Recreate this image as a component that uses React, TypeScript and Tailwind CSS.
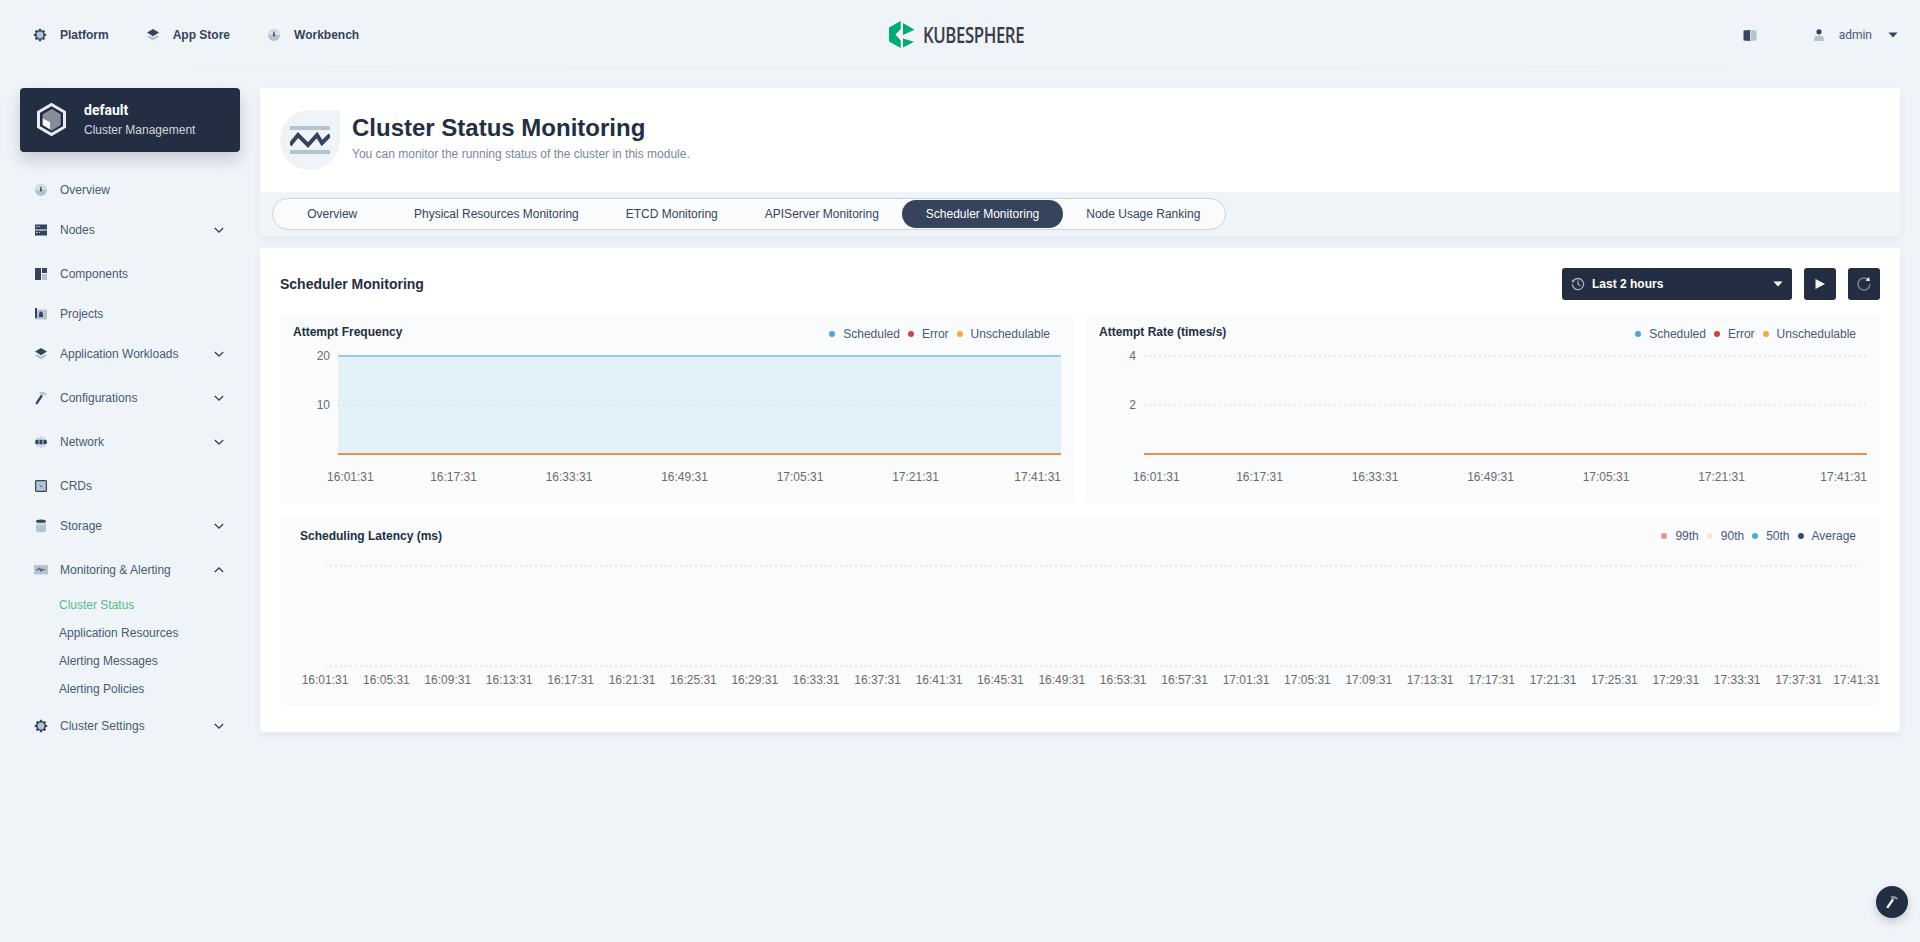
import type { ReactNode } from "react";

const DARK = "#36435c";
const LIGHT = "#b6c3cf";

// two tone nav icons, all on a 16 box
function Gear({ color = DARK }: { color?: string }) {
  return (
    <svg width="16" height="16" viewBox="0 0 16 16">
      {[0, 45, 90, 135, 180, 225, 270, 315].map((a) => (
        <rect key={a} x="6.9" y="1.8" width="2.2" height="2.2" fill={color} transform={`rotate(${a} 8 8)`} />
      ))}
      <circle cx="8" cy="8" r="4.2" fill={LIGHT} stroke={color} strokeWidth="1.6" />
    </svg>
  );
}

function Layers() {
  return (
    <svg width="16" height="16" viewBox="0 0 16 16">
      <path d="M2 9.6 4 8.6 8 10.6 12 8.6 14 9.6 8 13.6Z" fill={LIGHT} />
      <path d="M8 2 14 5.6 8 9.2 2 5.6Z" fill={DARK} />
    </svg>
  );
}

function Gauge() {
  return (
    <svg width="16" height="16" viewBox="0 0 16 16">
      <circle cx="8" cy="8" r="6" fill={LIGHT} />
      <path d="M8 2a6 6 0 0 1 6 6H2a6 6 0 0 1 6-6Z" fill="#d5dde5" />
      <path d="M7.6 4.4h.8l.6 4.2a1 1 0 1 1-2 0Z" fill={DARK} />
    </svg>
  );
}

function Server() {
  return (
    <svg width="16" height="16" viewBox="0 0 16 16">
      <rect x="2" y="2.5" width="12" height="5" fill={DARK} />
      <rect x="2" y="8.5" width="12" height="5" fill={DARK} />
      <rect x="3" y="4" width="2" height="1" fill={LIGHT} />
      <rect x="6" y="4" width="1" height="1" fill={LIGHT} />
      <rect x="3" y="10" width="2" height="1" fill={LIGHT} />
      <rect x="6" y="10" width="1" height="1" fill={LIGHT} />
      <rect x="7" y="7.5" width="2" height="1" fill={LIGHT} />
    </svg>
  );
}

function Blocks() {
  return (
    <svg width="16" height="16" viewBox="0 0 16 16">
      <rect x="2" y="2" width="6" height="12" fill={DARK} />
      <rect x="9" y="2" width="5" height="5" fill={DARK} />
      <rect x="9" y="8" width="5" height="6" fill={LIGHT} />
    </svg>
  );
}

function Project() {
  return (
    <svg width="16" height="16" viewBox="0 0 16 16">
      <rect x="2" y="3.5" width="12" height="10" fill={LIGHT} />
      <rect x="2" y="2" width="2" height="10" fill={DARK} />
      <path d="M8 5.5c1.4 0 1.8 1.6 2 3.5v2H6V9c.2-1.9.6-3.5 2-3.5Z" fill={DARK} />
    </svg>
  );
}

function Hammer({ handle = DARK, head = LIGHT }: { handle?: string; head?: string }) {
  return (
    <svg width="16" height="16" viewBox="0 0 16 16">
      <path d="M6.5 2.5C9 1.5 12 2 14 4.5l-1.5 1.2C11.5 4.8 10.5 4.4 9.5 5L8 5.2Z" fill={head} />
      <path d="M8 4.8 10 6 4.2 14.5 2.2 13.3Z" fill={handle} />
    </svg>
  );
}

function Globe() {
  return (
    <svg width="16" height="16" viewBox="0 0 16 16">
      <circle cx="8" cy="8" r="6" fill="#d0d9e1" />
      <path d="M6 2v12M10 2v12" stroke="#eff4f9" strokeWidth="0.8" />
      <rect x="2" y="5.8" width="12" height="4.4" rx="2.2" fill={DARK} />
      <path d="M6 5.8v4.4M10 5.8v4.4" stroke="#eff4f9" strokeWidth="0.8" />
    </svg>
  );
}

function Crd() {
  return (
    <svg width="16" height="16" viewBox="0 0 16 16">
      <rect x="2.6" y="2.6" width="10.8" height="10.8" rx="1" fill={LIGHT} stroke={DARK} strokeWidth="1.2" />
      <path d="M6.7 7.4 8 8.7l1.3-1.3" fill="none" stroke={DARK} strokeWidth="0.9" />
    </svg>
  );
}

function Storage() {
  return (
    <svg width="16" height="16" viewBox="0 0 16 16">
      <path d="M3 7h10v5.6c0 1-2.2 1.6-5 1.6s-5-.6-5-1.6Z" fill={LIGHT} />
      <path d="M3 3.4C3 2.4 5.2 1.6 8 1.6s5 .8 5 1.8v3c0 .8-2.2 1.3-5 1.3s-5-.5-5-1.3Z" fill="#cdd6de" />
      <ellipse cx="8" cy="3.2" rx="5" ry="1.6" fill={DARK} />
    </svg>
  );
}

function Pulse() {
  return (
    <svg width="16" height="16" viewBox="0 0 16 16">
      <rect x="1" y="3" width="14" height="9.4" rx="1" fill={LIGHT} />
      <path d="M3.4 7.8h2.2l1-2 1.2 3.6 1-2.6.7 1h2.6" fill="none" stroke={DARK} strokeWidth="1" />
    </svg>
  );
}

function Chevron({ up }: { up?: boolean }) {
  return (
    <svg width="12" height="12" viewBox="0 0 12 12" className={up ? "rotate-180" : ""}>
      <path d="M1.8 4 6 8l4.2-4" fill="none" stroke={DARK} strokeWidth="1.3" />
    </svg>
  );
}

function Caret({ color = DARK }: { color?: string }) {
  return (
    <svg width="10" height="6" viewBox="0 0 10 6">
      <path d="M0.5 0.5h9L5 5.5Z" fill={color} />
    </svg>
  );
}

function Logo() {
  return (
    <svg width="25" height="27" viewBox="0 0 25 27">
      <path d="M0 6.4 11.7 0V8L6.4 13.6 11.7 19.5V27L0 20.6Z" fill="#00aa72" />
      <path d="M14 2 25 8.4V9L14 14Z" fill="#00aa72" />
      <path d="M14 17.5 25 20.7 14 26.5Z" fill="#00aa72" />
    </svg>
  );
}

function HeaderLink({ icon, label }: { icon: ReactNode; label: string }) {
  return (
    <a className="flex items-center gap-3 text-xs font-bold text-[#36435c]">
      {icon}
      <span>{label}</span>
    </a>
  );
}

function NavItem({ icon, label, expand, up }: { icon: ReactNode; label: string; expand?: boolean; up?: boolean }) {
  return (
    <div className={`flex h-10 items-center pl-[13px] pr-[15px] text-xs text-[#4a5974] ${expand ? "mb-1" : ""}`}>
      <span className="mr-[11px] flex w-4 justify-center">{icon}</span>
      <span className="flex-1">{label}</span>
      {expand && <Chevron up={up} />}
    </div>
  );
}

const subItems = ["Cluster Status", "Application Resources", "Alerting Messages", "Alerting Policies"];

function Sidebar() {
  return (
    <aside className="w-[220px] shrink-0">
      <div className="flex h-16 items-center rounded-[4px] bg-[#242e42] pl-4 shadow-[0_8px_16px_rgba(36,46,66,0.2)]">
        <svg width="32" height="36" viewBox="0 0 32 36" className="mr-4">
          <path d="M15.5 2.5 28.5 10V25L15.5 32.5 2.5 25V10Z" fill="none" stroke="#e8ebef" strokeWidth="3" />
          <path d="M15.7 7 24.7 12.3V23L15.7 28.7 6.7 23V12.3Z" fill="#858d9a" />
          <path d="M6.7 16.3 14 20.3V27.3L6.7 23Z" fill="#f4f6f8" />
        </svg>
        <div>
          <p className="font-['Roboto',sans-serif] text-sm leading-5 font-bold text-white">default</p>
          <p className="text-xs leading-5 text-[#d1d7df]">Cluster Management</p>
        </div>
      </div>
      <nav className="mt-[18px]">
        <NavItem icon={<Gauge />} label="Overview" />
        <NavItem icon={<Server />} label="Nodes" expand />
        <NavItem icon={<Blocks />} label="Components" />
        <NavItem icon={<Project />} label="Projects" />
        <NavItem icon={<Layers />} label="Application Workloads" expand />
        <NavItem icon={<Hammer />} label="Configurations" expand />
        <NavItem icon={<Globe />} label="Network" expand />
        <NavItem icon={<Crd />} label="CRDs" />
        <NavItem icon={<Storage />} label="Storage" expand />
        <NavItem icon={<Pulse />} label="Monitoring & Alerting" expand up />
        <ul className="-mt-[3px] mb-[3px]">
          {subItems.map((s, i) => (
            <li key={s} className={`flex h-7 items-center pl-[39px] text-xs ${i === 0 ? "text-[#55bc8a]" : "text-[#4a5974]"}`}>
              {s}
            </li>
          ))}
        </ul>
        <NavItem icon={<Gear />} label="Cluster Settings" expand />
      </nav>
    </aside>
  );
}

function Legend({ items }: { items: { label: string; color: string }[] }) {
  return (
    <div className="flex items-center gap-2 pt-3 pr-6 text-xs leading-4 text-[#4a5974]">
      {items.map((it) => (
        <span key={it.label} className="flex items-center gap-2">
          <span className={`h-1.5 w-1.5 rounded-full ${it.color}`} />
          {it.label}
        </span>
      ))}
    </div>
  );
}

const schedLegend = [
  { label: "Scheduled", color: "bg-[#4aa8d8]" },
  { label: "Error", color: "bg-[#d34141]" },
  { label: "Unschedulable", color: "bg-[#f6a83a]" },
];

const latencyLegend = [
  { label: "99th", color: "bg-[#ee9186]" },
  { label: "90th", color: "bg-[#fde5c8]" },
  { label: "50th", color: "bg-[#4aa8d8]" },
  { label: "Average", color: "bg-[#3f4c64]" },
];

const shortTicks = ["16:17:31", "16:33:31", "16:49:31", "17:05:31", "17:21:31"];

function AttemptChart({ title, high, low, filled }: { title: string; high: string; low: string; filled?: boolean }) {
  return (
    <div className="rounded-[4px] bg-[#f9fbfd]">
      <div className="flex h-[38px] items-start justify-between">
        <h3 className="pt-[10px] pl-[13px] text-xs leading-4 font-bold text-[#242e42]">{title}</h3>
        <Legend items={schedLegend} />
      </div>
      <svg viewBox="0 0 794 152" className="block h-[152px] w-full overflow-visible text-xs">
        <line x1="58" x2="781" y1="53" y2="53" stroke="#d5dbe2" strokeDasharray="2 3" />
        <line x1="58" x2="781" y1="4" y2="4" stroke="#d5dbe2" strokeDasharray="2 3" />
        {filled && <rect x="58" y="4" width="723" height="98" fill="#e3f1f8" />}
        {filled && <line x1="58" x2="781" y1="4" y2="4" stroke="#78bfe2" strokeWidth="1.5" />}
        {filled && <line x1="58" x2="781" y1="53" y2="53" stroke="#cfdde5" strokeDasharray="2 3" />}
        <line x1="58" x2="781" y1="102" y2="102" stroke="#e6914c" strokeWidth="2" />
        <text x="50" y="8" textAnchor="end" fill="#6b6b6b">{high}</text>
        <text x="50" y="57" textAnchor="end" fill="#6b6b6b">{low}</text>
        <text x="47" y="129" fill="#6b6b6b">16:01:31</text>
        {shortTicks.map((t, i) => (
          <text key={t} x={173.5 + i * 115.5} y="129" textAnchor="middle" fill="#6b6b6b">{t}</text>
        ))}
        <text x="781" y="129" textAnchor="end" fill="#6b6b6b">17:41:31</text>
      </svg>
    </div>
  );
}

// every 4 minutes from 16:01:31 to 17:37:31, the last one is added on its own
const latencyTicks = Array.from({ length: 25 }, (_, i) => {
  const total = 1 + i * 4;
  const h = 16 + Math.floor(total / 60);
  const m = total % 60;
  return `${h}:${String(m).padStart(2, "0")}:31`;
});

function LatencyChart() {
  return (
    <div className="mt-3 rounded-[4px] bg-[#f9fbfd]">
      <div className="flex h-9 items-start justify-between">
        <h3 className="pt-3 pl-5 text-xs leading-4 font-bold text-[#242e42]">Scheduling Latency (ms)</h3>
        <Legend items={latencyLegend} />
      </div>
      <svg viewBox="0 0 1600 154" className="block h-[154px] w-full text-xs">
        <line x1="45" x2="1577" y1="14" y2="14" stroke="#d5dbe2" strokeDasharray="2 3" />
        <line x1="45" x2="1577" y1="114" y2="114" stroke="#d5dbe2" strokeDasharray="2 3" />
        {latencyTicks.map((t, i) => (
          <text key={t} x={45 + i * 61.4} y="132" textAnchor="middle" fill="#6b6b6b">{t}</text>
        ))}
        <text x="1600" y="132" textAnchor="end" fill="#6b6b6b">17:41:31</text>
      </svg>
    </div>
  );
}

const tabs = ["Overview", "Physical Resources Monitoring", "ETCD Monitoring", "APIServer Monitoring", "Scheduler Monitoring", "Node Usage Ranking"];

function Main() {
  return (
    <main className="min-w-0 flex-1">
      <div className="rounded-[4px] bg-[#eff4f9] shadow-[0_4px_8px_rgba(36,46,66,0.06)]">
        <div className="flex h-[104px] items-center rounded-t-[4px] bg-white pl-5">
          <div className="mr-3 flex h-[60px] w-[60px] items-center justify-center rounded-full rounded-tr-none bg-[#eff4f9]">
            <svg width="40" height="28" viewBox="0 0 40 28">
              <rect x="0" y="0" width="40" height="4" fill={LIGHT} />
              <rect x="0" y="24" width="40" height="4" fill={LIGHT} />
              <path d="M0 19 8 9l10 10 9-10 5 8 8-8" fill="none" stroke={DARK} strokeWidth="4" />
            </svg>
          </div>
          <div className="mb-[5px]">
            <h1 className="text-2xl leading-8 font-bold text-[#242e42]">Cluster Status Monitoring</h1>
            <p className="text-xs leading-5 text-[#79879c]">You can monitor the running status of the cluster in this module.</p>
          </div>
        </div>
        <div className="flex h-11 items-start pt-1.5 pl-3">
          <div className="flex h-8 items-center rounded-full border border-[#ccd3db] bg-[#f9fbfd] px-px">
            {tabs.map((t, i) => (
              <span
                key={t}
                className={`flex h-7 items-center justify-center rounded-full px-[23.5px] text-xs ${i === 0 ? "w-[116.5px]" : ""} ${
                  i === 4 ? "bg-[#36435c] text-white" : "text-[#36435c]"
                }`}
              >
                {t}
              </span>
            ))}
          </div>
        </div>
      </div>

      <section className="mt-3 h-[484px] rounded-[4px] bg-white px-5 pt-5 shadow-[0_4px_8px_rgba(36,46,66,0.06)]">
        <div className="flex h-8 items-center">
          <h2 className="flex-1 text-sm font-bold text-[#242e42]">Scheduler Monitoring</h2>
          <div className="flex h-8 w-[230px] items-center rounded-[3px] bg-[#242e42] pr-[9px] pl-[9px]">
            <svg width="14" height="14" viewBox="0 0 14 14" className="mr-[7px]">
              <path d="M2.2 4.2A5.6 5.6 0 1 1 1.4 7" fill="none" stroke="#a3adb9" strokeWidth="1.3" />
              <path d="M0.8 2.2v3h3Z" fill="#a3adb9" />
              <path d="M7 3.6v3.6l2.4 1.6" fill="none" stroke="#a3adb9" strokeWidth="1.3" />
            </svg>
            <span className="flex-1 text-xs font-bold text-white">Last 2 hours</span>
            <Caret color="#ffffff" />
          </div>
          <button className="ml-3 flex h-8 w-8 items-center justify-center rounded-[3px] bg-[#242e42]">
            <svg width="12" height="12" viewBox="0 0 12 12">
              <path d="M1.5 1 11 6l-9.5 5Z" fill="#eff4f9" />
            </svg>
          </button>
          <button className="ml-3 flex h-8 w-8 items-center justify-center rounded-[3px] bg-[#242e42]">
            <svg width="16" height="16" viewBox="0 0 16 16">
              <path d="M11.8 3.4A6 6 0 1 0 14 8" fill="none" stroke="#7b8592" strokeWidth="1.4" />
              <path d="M9.4 4.6 13.8 5.2 13 1Z" fill="#f2f4f7" />
            </svg>
          </button>
        </div>
        <div className="mt-3.5 grid grid-cols-2 gap-3">
          <AttemptChart title="Attempt Frequency" high="20" low="10" filled />
          <AttemptChart title="Attempt Rate (times/s)" high="4" low="2" />
        </div>
        <LatencyChart />
      </section>
    </main>
  );
}

export default function App() {
  return (
    <div className="h-[942px] overflow-hidden bg-[#eff4f9] font-['Liberation_Sans',Arial,sans-serif]">
      <header className="relative flex h-[68px] items-center justify-between pt-px pr-[22px] pl-8">
        <div className="flex items-center gap-9">
          <HeaderLink icon={<Gear />} label="Platform" />
          <HeaderLink icon={<Layers />} label="App Store" />
          <HeaderLink icon={<Gauge />} label="Workbench" />
        </div>
        <div className="absolute left-[889px] flex items-center gap-[9px]">
          <Logo />
          <span className="origin-left scale-x-[0.8] font-['Open_Sans',sans-serif] text-[21px] leading-7 font-semibold tracking-tight text-[#3e3a4a]">
            KUBESPHERE
          </span>
        </div>
        <div className="flex items-center">
          <svg width="16" height="16" viewBox="0 0 16 16" className="mr-[53px]">
            <path d="M1.5 3.5 8 3v11l-6.5-.5Z" fill={DARK} />
            <path d="M8.5 3 14.5 3.5v10L8.5 14Z" fill={LIGHT} />
          </svg>
          <svg width="16" height="16" viewBox="0 0 16 16" className="mr-[12px]">
            <circle cx="8" cy="4.8" r="2.6" fill={DARK} />
            <path d="M3.2 14v-2.4C3.2 9.6 5 8.4 8 8.4s4.8 1.2 4.8 3.2V14Z" fill={LIGHT} />
          </svg>
          <span className="mr-[16px] font-['Roboto',sans-serif] text-xs text-[#4a5974]">admin</span>
          <Caret />
        </div>
        <div className="absolute inset-x-0 bottom-0 h-px bg-gradient-to-r from-[#eff4f9] via-[#e1e7ed] to-[#eff4f9]" />
      </header>
      <div className="flex gap-5 px-5 pt-5">
        <Sidebar />
        <Main />
      </div>
      <button className="fixed right-3 bottom-6 flex h-8 w-8 items-center justify-center rounded-full bg-[#242e42] shadow-[0_4px_8px_rgba(36,46,66,0.2)]">
        <Hammer handle="#eff4f9" head="#8d94a0" />
      </button>
    </div>
  );
}
